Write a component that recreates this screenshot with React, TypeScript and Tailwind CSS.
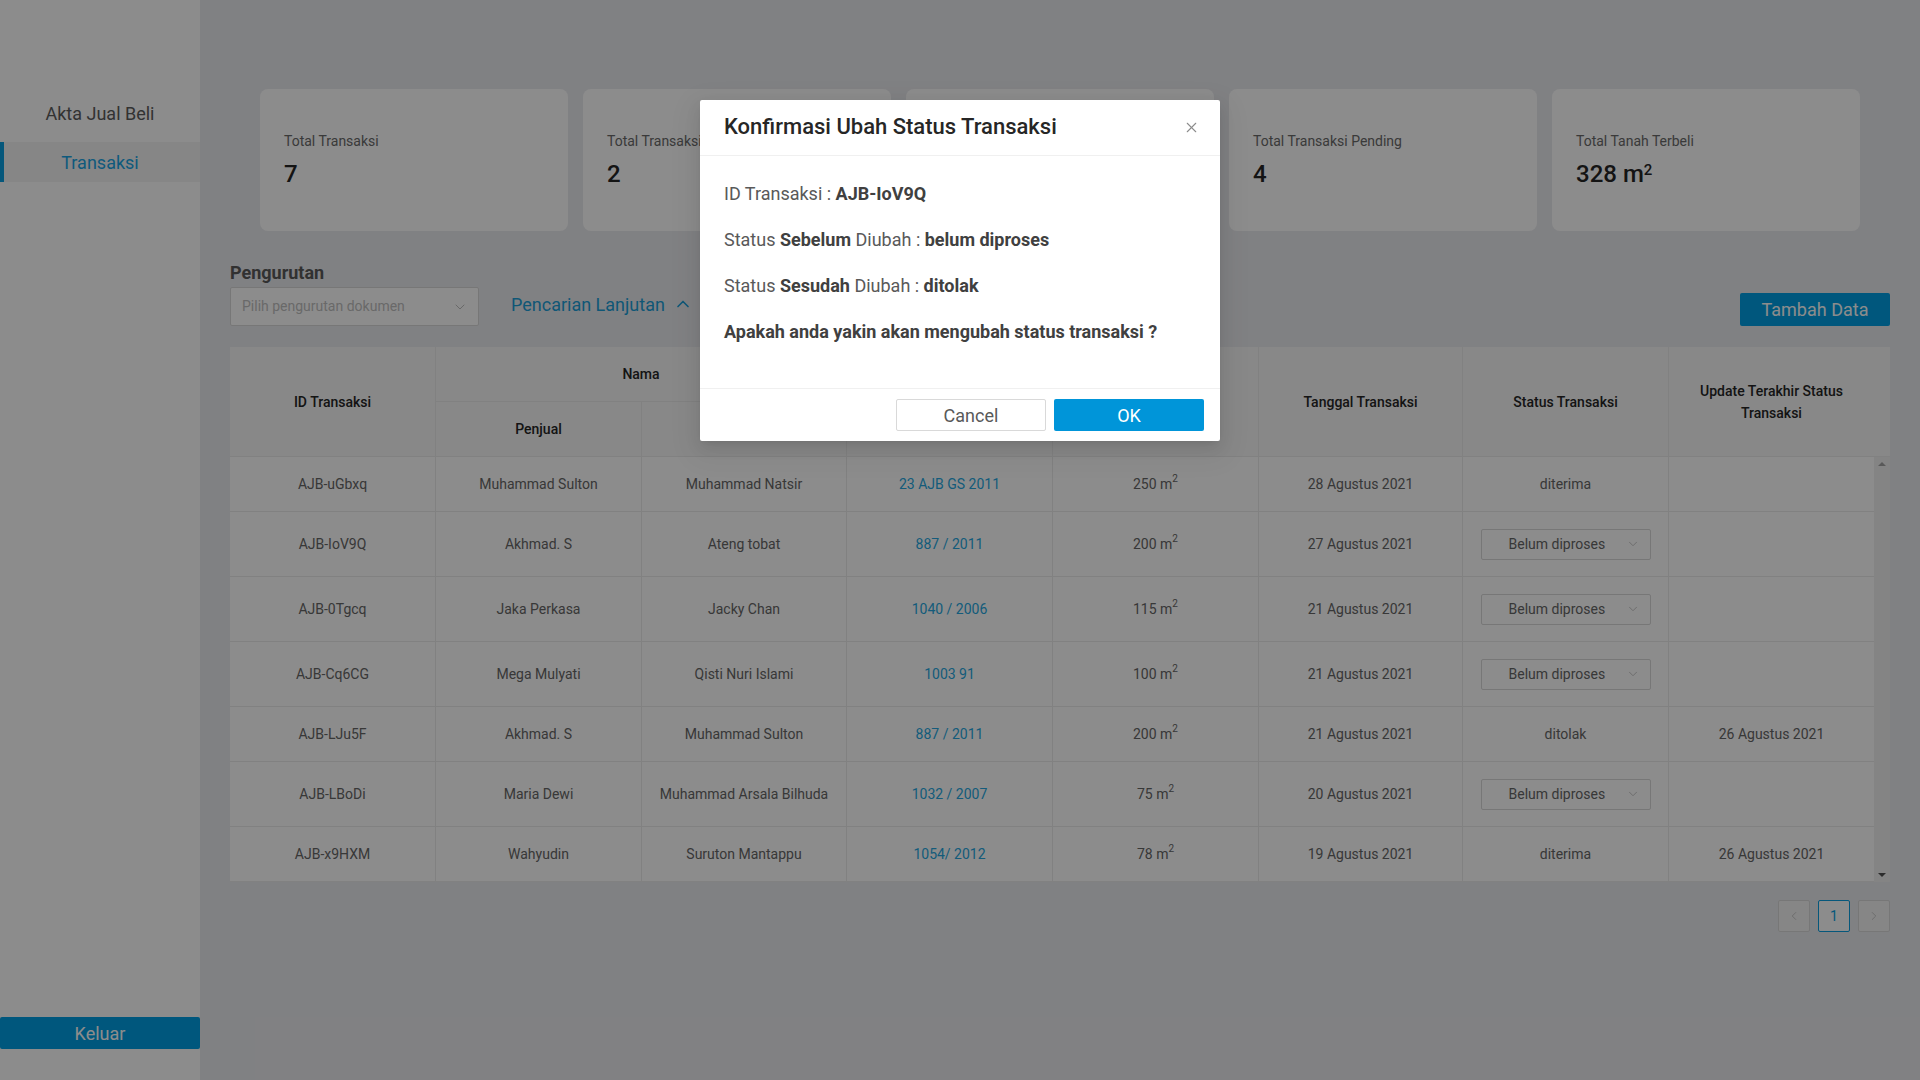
import React from "react";
import { ChevronDown, ChevronUp, ChevronLeft, ChevronRight, X } from "lucide-react";

type Row = {
  id: string;
  penjual: string;
  pembeli: string;
  akta: string;
  luas: string;
  tanggal: string;
  status: string | null;
  update: string;
};

const rows: Row[] = [
  { id: "AJB-uGbxq", penjual: "Muhammad Sulton", pembeli: "Muhammad Natsir", akta: "23 AJB GS 2011", luas: "250", tanggal: "28 Agustus 2021", status: "diterima", update: "" },
  { id: "AJB-IoV9Q", penjual: "Akhmad. S", pembeli: "Ateng tobat", akta: "887 / 2011", luas: "200", tanggal: "27 Agustus 2021", status: null, update: "" },
  { id: "AJB-0Tgcq", penjual: "Jaka Perkasa", pembeli: "Jacky Chan", akta: "1040 / 2006", luas: "115", tanggal: "21 Agustus 2021", status: null, update: "" },
  { id: "AJB-Cq6CG", penjual: "Mega Mulyati", pembeli: "Qisti Nuri Islami", akta: "1003 91", luas: "100", tanggal: "21 Agustus 2021", status: null, update: "" },
  { id: "AJB-LJu5F", penjual: "Akhmad. S", pembeli: "Muhammad Sulton", akta: "887 / 2011", luas: "200", tanggal: "21 Agustus 2021", status: "ditolak", update: "26 Agustus 2021" },
  { id: "AJB-LBoDi", penjual: "Maria Dewi", pembeli: "Muhammad Arsala Bilhuda", akta: "1032 / 2007", luas: "75", tanggal: "20 Agustus 2021", status: null, update: "" },
  { id: "AJB-x9HXM", penjual: "Wahyudin", pembeli: "Suruton Mantappu", akta: "1054/ 2012", luas: "78", tanggal: "19 Agustus 2021", status: "diterima", update: "26 Agustus 2021" },
];

const cards = [
  { label: "Total Transaksi", value: "7" },
  { label: "Total Transaksi Diterima", value: "2" },
  { label: "Total Transaksi Ditolak", value: "1" },
  { label: "Total Transaksi Pending", value: "4" },
  { label: "Total Tanah Terbeli", value: "328", unit: true },
];

function Cell({ children, className = "" }: { children?: React.ReactNode; className?: string }) {
  return (
    <div className={`flex items-center justify-center text-center border-r border-b border-[#ececec] ${className}`}>
      {children}
    </div>
  );
}

function HeadCell({ children, className = "" }: { children?: React.ReactNode; className?: string }) {
  return (
    <div className={`flex items-center justify-center text-center border-r border-b border-[#ececec] bg-[#f7f7f7] text-[14px] font-medium text-[#262626] leading-[22px] px-3 ${className}`}>
      {children}
    </div>
  );
}

export default function App() {
  return (
    <div className="relative flex h-[1080px] w-[1920px] overflow-hidden bg-[#eaebef] font-['Roboto',sans-serif]">
      {/* Sidebar */}
      <aside className="flex w-[200px] shrink-0 flex-col bg-white">
        <div className="mt-[93px] flex h-[40px] items-center justify-center text-[18px] text-[#5c5c5c]">Akta Jual Beli</div>
        <div className="mt-[9px] flex h-[40px] items-center justify-center border-l-4 border-[#0a9fe0] bg-[#f4f4f4] pr-1 text-[18px] text-[#1aa4e3]">
          Transaksi
        </div>
        <div className="mt-auto mb-[31px] flex h-[32px] items-center justify-center rounded-[2px] bg-[#009fe3] text-[18px] text-white">
          Keluar
        </div>
      </aside>

      {/* Main */}
      <main className="flex w-[1720px] flex-col px-[30px]">
        <div className="mt-[89px] grid grid-cols-5 gap-[15px] px-[30px]">
          {cards.map((c) => (
            <div key={c.label} className="flex h-[142px] flex-col justify-center rounded-lg bg-white px-6">
              <div className="text-[14px] leading-[20px] text-[#6a6a6a]">{c.label}</div>
              <div className="mt-[8px] text-[24px] font-medium leading-[30px] text-[#262626]">
                {c.value}
                {c.unit && (
                  <span>
                    {" "}m<sup className="text-[15px]">2</sup>
                  </span>
                )}
              </div>
            </div>
          ))}
        </div>

        <div className="mt-[30px] flex items-end justify-between">
          <div>
            <div className="text-[18px] font-bold leading-[24px] text-[#5a5a5a]">Pengurutan</div>
            <div className="mt-[2px] flex items-center gap-[32px]">
              <div className="flex h-[39px] w-[249px] items-center justify-between rounded-[2px] border border-[#d9d9d9] bg-white pl-[11px] pr-[10px]">
                <span className="text-[14px] text-[#bfbfbf]">Pilih pengurutan dokumen</span>
                <ChevronDown size={16} strokeWidth={1.5} color="#bfbfbf" />
              </div>
              <div className="mb-[5px] flex items-center gap-[8px] text-[18px] text-[#1d9fd8]">
                <span>Pencarian Lanjutan</span>
                <ChevronUp size={20} strokeWidth={2} color="#1d9fd8" />
              </div>
            </div>
          </div>
          <div className="flex h-[33px] w-[150px] items-center justify-center rounded-[2px] bg-[#009fe3] text-[18px] text-white">
            Tambah Data
          </div>
        </div>

        {/* Table */}
        <div className="mt-[21px] w-[1660px] bg-white">
          <div className="grid grid-cols-[206px_206px_205px_206px_206px_204px_206px_205px_16px] grid-rows-[55px_55px]">
            <HeadCell className="row-span-2">ID Transaksi</HeadCell>
            <HeadCell className="col-span-2">Nama</HeadCell>
            <HeadCell className="row-span-2">Nomor Akta</HeadCell>
            <HeadCell className="row-span-2">Luas Tanah</HeadCell>
            <HeadCell className="row-span-2">Tanggal Transaksi</HeadCell>
            <HeadCell className="row-span-2">Status Transaksi</HeadCell>
            <HeadCell className="row-span-2 border-r-0 px-5">Update Terakhir Status Transaksi</HeadCell>
            <div className="row-span-2 border-b border-[#ececec] bg-[#f7f7f7]" />
            <HeadCell>Penjual</HeadCell>
            <HeadCell>Pembeli</HeadCell>
          </div>
          <div className="flex">
            <div className="w-[1644px] text-[14px] text-[#666666]">
              {rows.map((r) => (
                <div
                  key={r.id}
                  className={`grid grid-cols-[206px_206px_205px_206px_206px_204px_206px_205px] ${r.status ? "h-[55px]" : "h-[65px]"}`}
                >
                  <Cell>{r.id}</Cell>
                  <Cell>{r.penjual}</Cell>
                  <Cell>{r.pembeli}</Cell>
                  <Cell className="text-[#26a7e0]">{r.akta}</Cell>
                  <Cell>
                    {r.luas} m<sup className="text-[10px]">2</sup>
                  </Cell>
                  <Cell>{r.tanggal}</Cell>
                  <Cell>
                    {r.status ? (
                      r.status
                    ) : (
                      <div className="flex h-[31px] w-[170px] items-center rounded-[2px] border border-[#d9d9d9] bg-white pl-[27px] pr-[10px]">
                        <span className="flex-1 text-left">Belum diproses</span>
                        <ChevronDown size={14} strokeWidth={1.5} color="#bfbfbf" />
                      </div>
                    )}
                  </Cell>
                  <Cell className="border-r-0">{r.update}</Cell>
                </div>
              ))}
            </div>
            <div className="flex w-[16px] flex-col items-center justify-between bg-[#f1f1f1] py-[5px]">
              <div className="h-0 w-0 border-x-[4px] border-b-[4px] border-x-transparent border-b-[#a3a3a3]" />
              <div className="h-0 w-0 border-x-[4px] border-t-[4px] border-x-transparent border-t-[#505050]" />
            </div>
          </div>
        </div>

        <div className="mt-[18px] flex justify-end gap-[8px]">
          <div className="flex h-[32px] w-[32px] items-center justify-center rounded-[2px] border border-[#d9d9d9] bg-[#f5f5f5]">
            <ChevronLeft size={14} strokeWidth={1.5} color="#bfbfbf" />
          </div>
          <div className="flex h-[32px] w-[32px] items-center justify-center rounded-[2px] border border-[#0a9fe0] bg-white text-[14px] text-[#0a9fe0]">
            1
          </div>
          <div className="flex h-[32px] w-[32px] items-center justify-center rounded-[2px] border border-[#d9d9d9] bg-[#f5f5f5]">
            <ChevronRight size={14} strokeWidth={1.5} color="#bfbfbf" />
          </div>
        </div>
      </main>

      {/* Overlay */}
      <div className="absolute inset-0 bg-black/45" />

      {/* Modal */}
      <div className="absolute left-[700px] top-[100px] w-[520px] rounded-[2px] bg-white shadow-[0_6px_16px_rgba(0,0,0,0.08),0_3px_6px_-4px_rgba(0,0,0,0.12),0_9px_28px_8px_rgba(0,0,0,0.05)]">
        <div className="flex h-[56px] items-center justify-between border-b border-[#f0f0f0] pl-6 pr-[20px]">
          <span className="mb-[2px] text-[22px] font-medium text-[#262626]">Konfirmasi Ubah Status Transaksi</span>
          <X size={17} strokeWidth={1.5} color="#8c8c8c" />
        </div>
        <div className="px-6 pt-[24px] pb-[24px] text-[18px] leading-[28px] text-[#595959]">
          <p className="mb-[18px]">
            ID Transaksi : <b className="font-bold text-[#404040]">AJB-IoV9Q</b>
          </p>
          <p className="mb-[18px]">
            Status <b className="font-bold text-[#404040]">Sebelum</b> Diubah : <b className="font-bold text-[#404040]">belum diproses</b>
          </p>
          <p className="mb-[18px]">
            Status <b className="font-bold text-[#404040]">Sesudah</b> Diubah : <b className="font-bold text-[#404040]">ditolak</b>
          </p>
          <p className="mb-[18px] font-bold text-[#404040]">Apakah anda yakin akan mengubah status transaksi ?</p>
        </div>
        <div className="flex justify-end gap-[8px] border-t border-[#f0f0f0] px-4 py-[10px]">
          <div className="flex h-[32px] w-[150px] items-center justify-center rounded-[2px] border border-[#d9d9d9] text-[18px] text-[#595959]">
            Cancel
          </div>
          <div className="flex h-[32px] w-[150px] items-center justify-center rounded-[2px] bg-[#0095d9] text-[18px] text-white">
            OK
          </div>
        </div>
      </div>
    </div>
  );
}
